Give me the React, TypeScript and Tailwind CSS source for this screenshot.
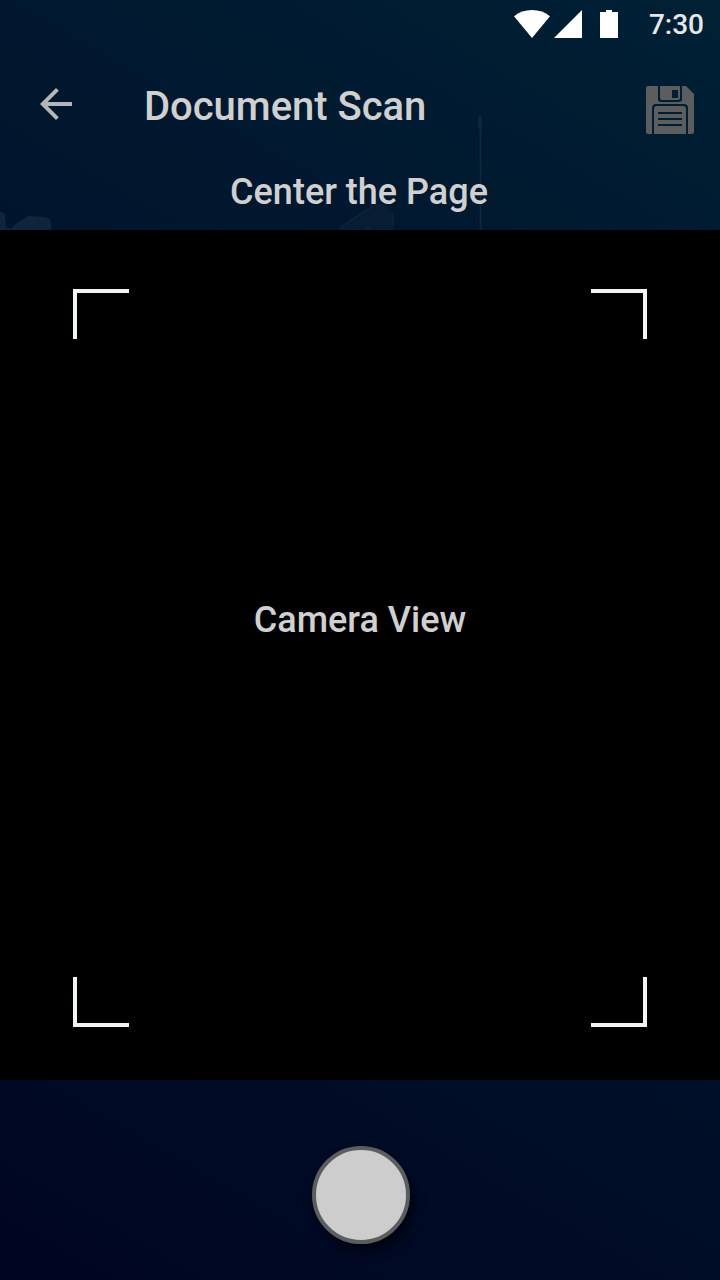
function StatusBar() {
  return (
    <div className="flex h-12 items-center justify-end pr-4">
      <svg className="h-7 w-[105px]" viewBox="0 0 105 28" fill="#fff" aria-hidden="true">
        <path d="M0 6.2C5 2 11 0 18 0s13 2 18 6.2L18 28z" />
        <path d="M68 0v28H40z" />
        <path d="M86 2h6V0h6v2h6v26H86z" />
      </svg>
      <span className="ml-[30px] pt-0.5 text-[28px] leading-none font-medium text-[#e5e8ea]">7:30</span>
    </div>
  );
}

function BackIcon() {
  return (
    <svg className="size-12" viewBox="0 0 24 24" fill="#b3b6b9" aria-hidden="true">
      <path d="M20 11H7.83l5.59-5.59L12 4l-8 8 8 8 1.41-1.41L7.83 13H20v-2z" />
    </svg>
  );
}

function SaveIcon() {
  return (
    <svg className="size-12" viewBox="0 0 48 48" fill="#5c5d5e" aria-hidden="true">
      <path d="M2 0h10v13q0 3 3 3h18q3 0 3-3V0h4l8 8v38q0 2-2 2h-4V22q0-4-4-4H10q-4 0-4 4v26H2q-2 0-2-2V2q0-2 2-2z" />
      <path
        fillRule="evenodd"
        d="M14 0h20v12q0 2-2 2H16q-2 0-2-2zM26 4v8h6V4z"
      />
      <path
        fillRule="evenodd"
        d="M8 48V23q0-3 3-3h26q3 0 3 3v25zM12 26v2h24v-2zM12 32v2h24v-2zM12 38v2h24v-2z"
      />
    </svg>
  );
}

function Backdrop() {
  return (
    <svg className="absolute inset-0 h-[230px] w-[720px]" viewBox="0 0 720 230" aria-hidden="true">
      <path d="M0 212q5 0 5 4l1 11 5 2q7-9 18-13l16 1q6 1 6 6v7H0z" fill="#10243b" />
      <path d="M340 230q2-5 8-8l20-13q8-5 14-4 12 2 12 16v9z" fill="#071d34" />
      <path d="M340 230q2-5 8-8l20-13q8-5 14-4" fill="none" stroke="#122940" />
      <path d="M392 213q2 5 1 12M366 230l2-4 2 4" fill="none" stroke="#122a40" />
      <path d="M480.5 118v112" fill="none" stroke="#10283d" strokeWidth="1.8" />
      <path d="M480 117v11" fill="none" stroke="#10293e" strokeWidth="3" strokeLinecap="round" />
    </svg>
  );
}

function Header() {
  return (
    <header className="relative h-[230px]">
      <Backdrop />
      <div className="relative">
        <StatusBar />
        <div className="flex h-28 items-start pt-8 pr-[26px] pl-8">
          <button aria-label="Back">
            <BackIcon />
          </button>
          <h1 className="ml-16 pt-[3px] text-[40px] leading-12 font-medium tracking-[-0.03px] text-[#d0d0d0]">
            Document Scan
          </h1>
          <button className="mt-1.5 ml-auto" aria-label="Save">
            <SaveIcon />
          </button>
        </div>
        <p className="pt-2 pr-0.5 text-center text-4xl leading-12 font-medium text-[#d0d0d0]">Center the Page</p>
      </div>
    </header>
  );
}

function CameraView() {
  return (
    <main className="flex h-[850px] flex-col justify-between bg-black px-[73px] pt-[59px] pb-[53px]">
      <div className="flex justify-between">
        <span className="h-[50px] w-14 border-t-4 border-l-4 border-[#f1f4f4]" />
        <span className="h-[50px] w-14 border-t-4 border-r-4 border-[#f1f4f4]" />
      </div>
      <p className="mb-[76px] text-center text-4xl leading-12 font-medium text-[#d0d0d0]">Camera View</p>
      <div className="flex justify-between">
        <span className="h-[50px] w-14 border-b-4 border-l-4 border-[#f1f4f4]" />
        <span className="h-[50px] w-14 border-r-4 border-b-4 border-[#f1f4f4]" />
      </div>
    </main>
  );
}

export default function App() {
  return (
    <div className="h-[1280px] w-[720px] overflow-hidden bg-[linear-gradient(210deg,#002034_0%,#00172e_28%,#000d27_75%,#000521_100%)] font-['Roboto',sans-serif]">
      <Header />
      <CameraView />
      <footer className="flex h-[200px] justify-center pt-[66px] pl-0.5">
        <button
          className="size-[98px] rounded-full border-4 border-[#5c5d5e] bg-[#cdcdcd] shadow-[4px_6px_12px_rgba(0,0,0,0.65)]"
          aria-label="Capture"
        />
      </footer>
    </div>
  );
}
